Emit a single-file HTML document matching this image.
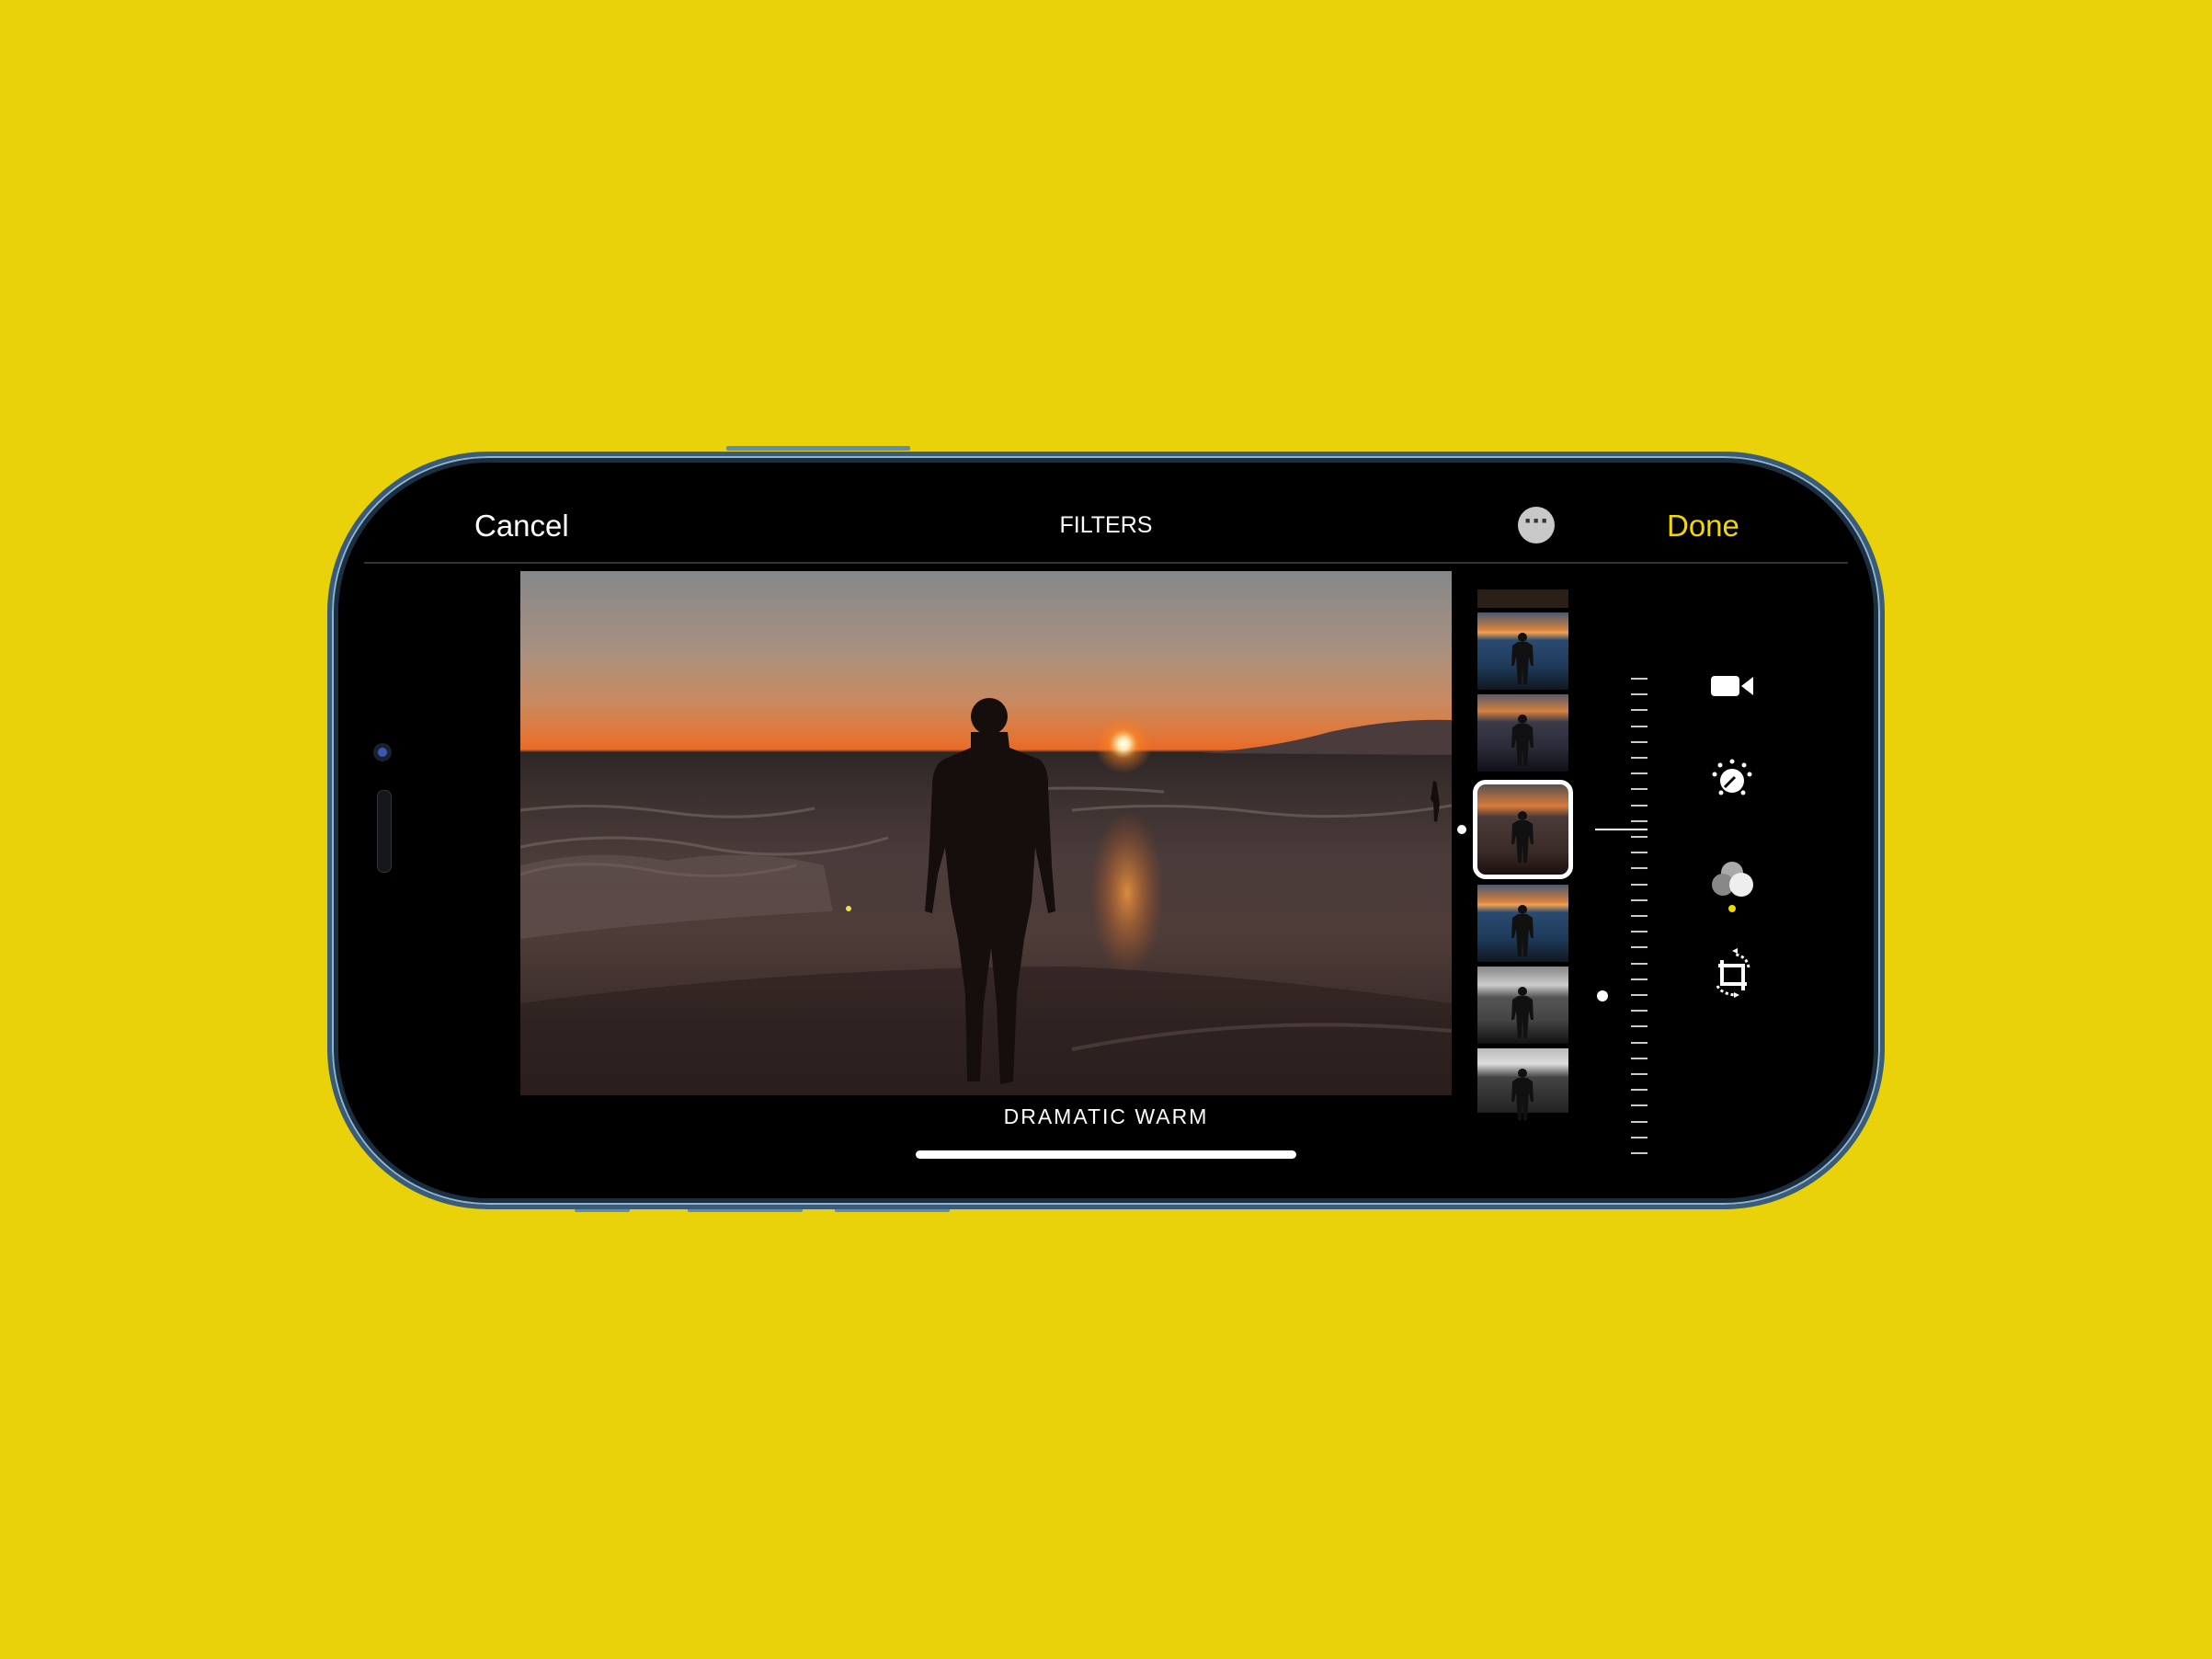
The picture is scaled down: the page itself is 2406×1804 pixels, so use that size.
<!DOCTYPE html>
<html><head><meta charset="utf-8"><style>
body{margin:0;width:2406px;height:1804px;background:#ead20a;position:relative;overflow:hidden;font-family:"Liberation Sans",sans-serif}
.abs{position:absolute}
.phone{left:356px;top:491px;width:1694px;height:824px;border-radius:175px;background:#000;box-sizing:border-box;border:5px solid #3a5c78;box-shadow:inset 0 0 0 2px #8fb5d2,inset 0 0 0 7px #1c2f40}
.btn{background:#5f8cb8;height:5px;border-radius:2px}
.t{color:#fff;white-space:nowrap}
.photo{left:566px;top:621px;width:1013px;height:570px;overflow:hidden;background:linear-gradient(#85888a 0%,#a89080 15%,#c88a60 25%,#e0783a 31%,#e86a28 34%,#2e2626 34.6%,#3a302e 42%,#4a3c3a 55%,#4e3c38 70%,#3a2c2a 85%,#2a2020 100%)}
.thumb{left:1607px;width:99px;height:84px}
.tick{left:1774px;width:18px;height:2px;background:#ccc}
</style></head><body>
<div class="abs btn" style="left:790px;top:485px;width:200px"></div>
<div class="abs btn" style="left:625px;top:1313px;width:60px"></div>
<div class="abs btn" style="left:748px;top:1313px;width:125px"></div>
<div class="abs btn" style="left:908px;top:1313px;width:125px"></div>
<div class="abs phone"></div>
<div class="abs" style="left:406px;top:808px;width:20px;height:20px;border-radius:50%;background:#1a2030"><div style="margin:5px;width:10px;height:10px;border-radius:50%;background:#3a58b0"></div></div>
<div class="abs" style="left:410px;top:859px;width:14px;height:88px;border-radius:7px;background:#15171a;border:1px solid #333"></div>
<div class="abs t" style="left:516px;top:553px;font-size:33px">Cancel</div>
<div class="abs t" style="left:1143px;top:557px;font-size:25px;width:120px;text-align:center">FILTERS</div>
<div class="abs" style="left:1651px;top:551px;width:40px;height:40px;border-radius:50%;background:#c8c8c8;text-align:center;line-height:32px;font-size:30px;color:#333;font-weight:bold;letter-spacing:-1px">···</div>
<div class="abs t" style="left:1813px;top:553px;font-size:33px;color:#f0d800">Done</div>
<div class="abs" style="left:396px;top:611px;width:1614px;height:2px;background:#333"></div>
<div class="abs photo">
<svg width="1013" height="570" viewBox="0 0 1013 570" style="position:absolute;left:0;top:0">
<defs><radialGradient id="s" cx="0.5" cy="0.5" r="0.5"><stop offset="0" stop-color="#fff"/><stop offset="0.2" stop-color="#ffe8b0"/><stop offset="0.5" stop-color="#ff8a20" stop-opacity="0.5"/><stop offset="1" stop-color="#ff7020" stop-opacity="0"/></radialGradient>
<radialGradient id="r" cx="0.5" cy="0.5" r="0.5"><stop offset="0" stop-color="#ffa040"/><stop offset="1" stop-color="#c05020" stop-opacity="0"/></radialGradient></defs>
<circle cx="656" cy="188" r="32" fill="url(#s)"/>
<path d="M740 198 Q820 192 880 175 Q950 160 1013 162 L1013 200 Z" fill="#4a3c3c"/>
<ellipse cx="660" cy="350" rx="40" ry="90" fill="url(#r)" opacity="0.8"/>
<g stroke="#7a6a66" stroke-width="3" fill="none" opacity="0.6">
<path d="M0 260 Q80 250 160 262 T320 258"/><path d="M0 300 Q100 280 200 300 T400 290"/><path d="M0 330 Q60 310 140 325 T300 320"/>
<path d="M600 260 Q700 250 800 262 T1013 255"/><path d="M500 240 Q600 232 700 240"/></g>
<path d="M0 320 Q80 300 160 315 Q250 300 330 320 L340 370 Q150 380 0 400Z" fill="#6a5856" opacity="0.5"/>
<path d="M0 470 Q300 430 600 430 Q800 440 1013 470 L1013 570 L0 570Z" fill="#2a1e1c" opacity="0.6"/>
<path d="M600 520 Q800 480 1013 500" stroke="#5a4a48" stroke-width="4" fill="none" opacity="0.6"/>
<circle cx="510" cy="158" r="20" fill="#150e0c"/>
<path d="M490 175 L530 175 L532 192 L565 205 Q575 215 574 235 L578 320 L582 370 L574 372 L566 330 L560 300 L556 360 L548 400 L540 460 L536 555 L522 558 L518 470 L512 410 L504 470 L500 555 L486 555 L484 460 L476 400 L468 360 L462 300 L454 330 L448 372 L440 370 L444 320 L448 235 Q448 212 460 205 L490 192 Z" fill="#150e0c"/>
<path d="M993 228 q4 0 4 5 l3 20 -3 20 -3 -1 -1 -20 -3 -4z" fill="#150e0c"/>
<circle cx="357" cy="367" r="3" fill="#f0e040"/>
</svg></div>
<div class="abs t" style="left:1053px;top:1201px;font-size:23px;width:300px;text-align:center;letter-spacing:2px">DRAMATIC WARM</div>
<div class="abs" style="left:996px;top:1251px;width:414px;height:9px;border-radius:5px;background:#fff"></div>
<svg width="0" height="0" style="position:absolute"><defs>
<symbol id="fig" viewBox="0 0 99 84"><circle cx="49" cy="27" r="5" fill="#111"/><path d="M44 32 h10 l6 4 1 22 -3 0 -2 -10 -2 30 -4 0 -1 -20 -1 20 -4 0 -2 -30 -2 10 -3 0 1 -22z" fill="#111"/></symbol></defs></svg>
<div class="abs thumb" style="top:641px;height:20px;background:#2a2018"></div>
<div class="abs thumb" style="top:666px;background:linear-gradient(#4a5a70 0%,#d58040 22%,#f0a050 26%,#2a4a70 36%,#1e3a5a 70%,#101820 100%)"><svg width="99" height="84"><use href="#fig"/></svg></div>
<div class="abs thumb" style="top:755px;background:linear-gradient(#5a5a68 0%,#d58040 22%,#3a3a48 36%,#2a2a38 70%,#101018 100%)"><svg width="99" height="84"><use href="#fig"/></svg></div>
<div class="abs thumb" style="top:962px;background:linear-gradient(#4a5a70 0%,#d58040 22%,#f0a050 26%,#2a4a70 36%,#1e3a5a 70%,#101820 100%)"><svg width="99" height="84"><use href="#fig"/></svg></div>
<div class="abs thumb" style="top:1051px;background:linear-gradient(#888 0%,#ccc 24%,#555 40%,#444 70%,#111 100%)"><svg width="99" height="84"><use href="#fig"/></svg></div>
<div class="abs thumb" style="top:1140px;height:70px;background:linear-gradient(#bbb 0%,#ddd 24%,#444 45%,#222 100%)"><svg width="99" height="84"><use href="#fig"/></svg></div>
<div class="abs" style="left:1602px;top:848px;width:109px;height:108px;border:5px solid #fff;border-radius:14px;box-sizing:border-box;overflow:hidden;background:linear-gradient(#5a5050 0%,#d87a3a 24%,#4a3a38 36%,#3a2a28 75%,#1a1010 100%)"><svg width="99" height="98" viewBox="0 0 99 84"><use href="#fig"/></svg></div>
<div class="abs" style="left:1585px;top:897px;width:10px;height:10px;border-radius:50%;background:#fff"></div>
<div class="abs" style="left:1737px;top:1077px;width:12px;height:12px;border-radius:50%;background:#fff"></div>
<div class="abs" style="left:1735px;top:901px;width:57px;height:2px;background:#fff"></div>
<div id="ticks"></div>
<script>
var h='';for(var y=737;y<=1255;y+=17.2){h+='<div class="abs tick" style="top:'+Math.round(y)+'px"></div>';}document.getElementById('ticks').innerHTML=h;
</script>
<svg class="abs" style="left:1840px;top:700px" width="90" height="400" viewBox="0 0 90 400">
<rect x="21" y="35" width="31" height="22" rx="4" fill="#fff"/><path d="M54 46 L67 36 V56 Z" fill="#fff"/>
<g fill="#fff"><circle cx="44" cy="149" r="13"/><circle cx="44" cy="128" r="2.5"/><circle cx="63" cy="142" r="2.5"/><circle cx="25" cy="142" r="2.5"/><circle cx="31" cy="132" r="2.5"/><circle cx="57" cy="132" r="2.5"/><circle cx="32" cy="162" r="2.5"/><circle cx="56" cy="162" r="2.5"/></g>
<path d="M36 156 L47 145" stroke="#000" stroke-width="3"/>
<circle cx="44" cy="249" r="12" fill="#aaa"/><circle cx="34" cy="262" r="12" fill="#888"/><circle cx="54" cy="262" r="13" fill="#eee"/>
<circle cx="44" cy="288" r="4" fill="#f0d800"/>
<g stroke="#fff" stroke-width="4" fill="none"><path d="M29 350 H56 V372 M33 344 V370 H60 M56 368 V377"/></g>
<path d="M28 372 q4 8 18 10 M62 352 q-2 -12 -14 -14" stroke="#fff" stroke-width="3" stroke-dasharray="3 3" fill="none"/>
<path d="M46 379 l6 3 -6 3z M50 337 l-6 -3 6 -3z" fill="#fff"/>
</svg>
</body></html>
